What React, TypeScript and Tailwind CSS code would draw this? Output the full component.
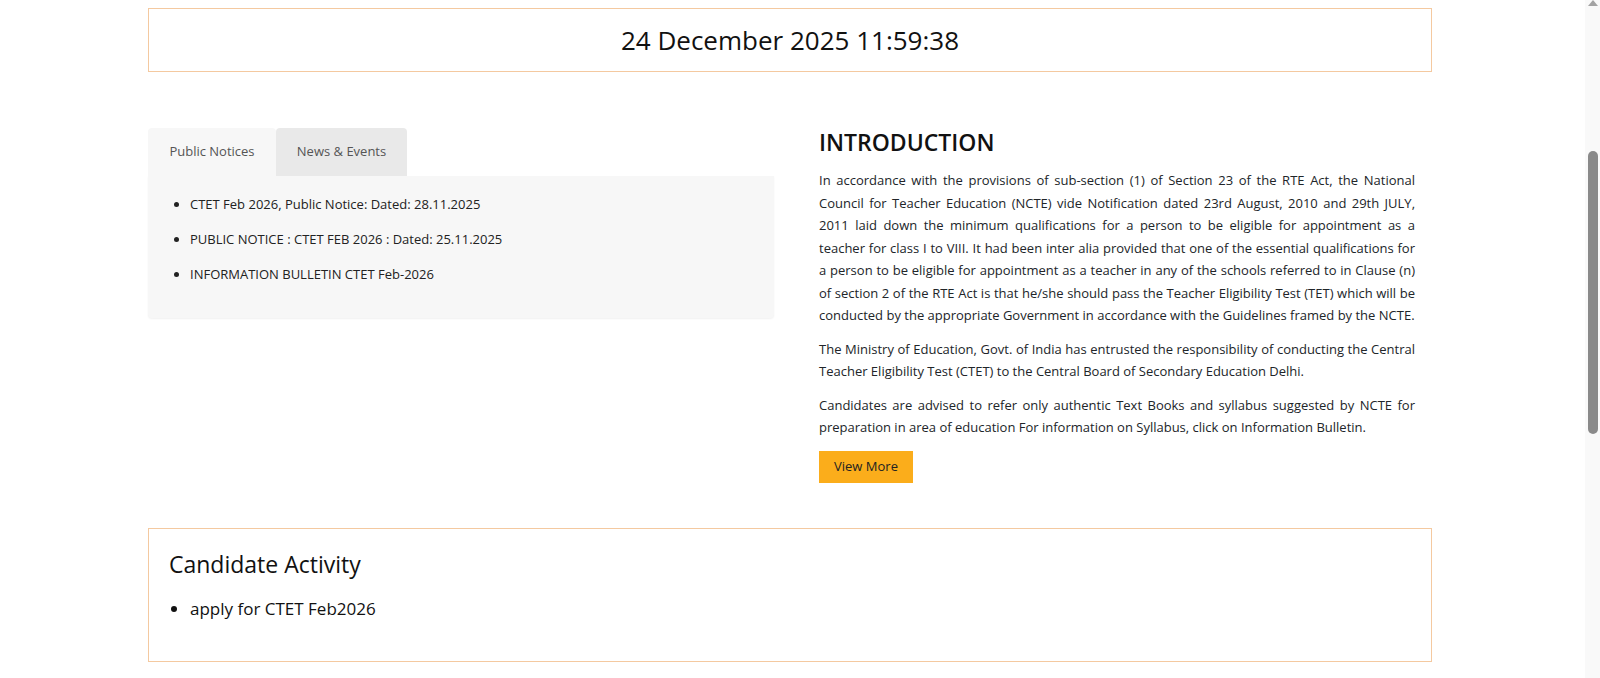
import { useState } from "react";

const notices = [
  "CTET Feb 2026, Public Notice: Dated: 28.11.2025",
  "PUBLIC NOTICE : CTET FEB 2026 : Dated: 25.11.2025",
  "INFORMATION BULLETIN CTET Feb-2026",
];

const App = () => {
  const [tab, setTab] = useState("notices");

  return (
    <div className="flex h-[678px] overflow-hidden bg-white text-[#212529] font-['Open_Sans',sans-serif]">
      <main className="flex-1">
        <div className="ml-[148px] w-[1284px] pt-2">
          {/* date strip */}
          <div className="flex h-16 items-center justify-center border border-[#f4c9a0]">
            <span className="text-[26px] text-[#111]">24 December 2025 11:59:38</span>
          </div>

          <div className="mt-14 flex gap-[45px]">
            {/* tabs */}
            <div className="w-[626px]">
              <div className="flex text-[13px] text-[#555]">
                <button
                  onClick={() => setTab("notices")}
                  className={`h-12 w-[128px] rounded-t ${tab === "notices" ? "bg-[#f7f7f7]" : "bg-[#e9e9e9]"}`}
                >
                  Public Notices
                </button>
                <button
                  onClick={() => setTab("news")}
                  className={`h-12 w-[131px] rounded-t ${tab === "news" ? "bg-[#f7f7f7]" : "bg-[#e9e9e9]"}`}
                >
                  News &amp; Events
                </button>
              </div>
              <div className="h-[142px] rounded-b bg-[#f7f7f7] pt-[18px] shadow-[0_1px_2px_rgba(0,0,0,0.06)]">
                <ul className="list-disc pl-[42px] text-[13px] text-[#222]">
                  {tab === "notices" &&
                    notices.map((n) => (
                      <li key={n} className="mb-[15px] leading-5">
                        {n}
                      </li>
                    ))}
                </ul>
              </div>
            </div>

            {/* introduction */}
            <div className="w-[596px]">
              <h2 className="mb-3 text-[23px] font-semibold leading-[29px] text-[#111]">INTRODUCTION</h2>
              <p className="mb-[11px] text-justify text-[13px] leading-[22.5px]">
                In accordance with the provisions of sub-section (1) of Section 23 of the RTE Act, the National
                Council for Teacher Education (NCTE) vide Notification dated 23rd August, 2010 and 29th JULY, 2011
                laid down the minimum qualifications for a person to be eligible for appointment as a teacher for
                class I to VIII. It had been inter alia provided that one of the essential qualifications for a
                person to be eligible for appointment as a teacher in any of the schools referred to in Clause (n)
                of section 2 of the RTE Act is that he/she should pass the Teacher Eligibility Test (TET) which will
                be conducted by the appropriate Government in accordance with the Guidelines framed by the NCTE.
              </p>
              <p className="mb-[11px] text-justify text-[13px] leading-[22.5px]">
                The Ministry of Education, Govt. of India has entrusted the responsibility of conducting the Central
                Teacher Eligibility Test (CTET) to the Central Board of Secondary Education Delhi.
              </p>
              <p className="text-justify text-[13px] leading-[22.5px]">
                Candidates are advised to refer only authentic Text Books and syllabus suggested by NCTE for
                preparation in area of education For information on Syllabus, click on Information Bulletin.
              </p>
              <button className="mt-3 h-8 w-[94px] bg-[#fbad1b] text-[13px] text-[#222]">View More</button>
            </div>
          </div>

          {/* candidate activity */}
          <div className="mt-[45px] h-[134px] border border-[#f4c9a0] px-5 pt-5">
            <h3 className="text-[23px] leading-[30px] text-[#111]">Candidate Activity</h3>
            <ul className="mt-[18px] list-disc pl-[21px] text-[17px] leading-6 text-[#111]">
              <li>apply for CTET Feb2026</li>
            </ul>
          </div>
        </div>
      </main>

      {/* scrollbar */}
      <aside className="flex w-[15px] flex-col items-center bg-[#f9f9f9]">
        <div className="h-0 w-0 border-x-[5px] border-b-[6px] border-x-transparent border-b-[#a3a3a3]" />
        <div className="mt-[145px] h-[283px] w-[10px] rounded-full bg-[#8a8a8a]" />
      </aside>
    </div>
  );
};

export default App;
